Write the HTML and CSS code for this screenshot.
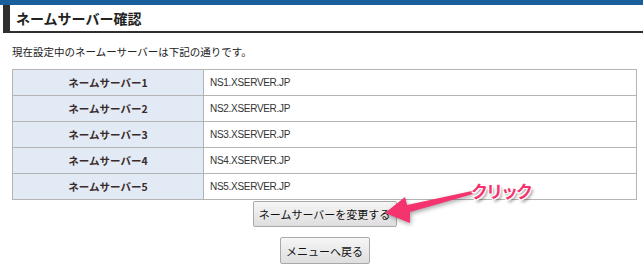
FILE: index.html
```html
<!DOCTYPE html>
<html lang="ja">
<head>
  <meta charset="UTF-8">
  <title>ネームサーバー確認</title>
  <link rel="stylesheet" href="styles.css">
</head>
<body>
  <div class="topbar"></div>

  <div class="page">
    <h2 class="heading">ネームサーバー確認</h2>

    <div class="content">
      <p class="lead">現在設定中のネームーサーバーは下記の通りです。</p>

      <table class="ns-table">
        <tr><th>ネームサーバー1</th><td>NS1.XSERVER.JP</td></tr>
        <tr><th>ネームサーバー2</th><td>NS2.XSERVER.JP</td></tr>
        <tr><th>ネームサーバー3</th><td>NS3.XSERVER.JP</td></tr>
        <tr><th>ネームサーバー4</th><td>NS4.XSERVER.JP</td></tr>
        <tr><th>ネームサーバー5</th><td>NS5.XSERVER.JP</td></tr>
      </table>

      <div class="actions">
        <button class="btn btn-change">ネームサーバーを変更する</button>
        <button class="btn btn-back">メニューへ戻る</button>
      </div>
    </div>

    <!-- 注釈 -->
    <svg class="arrow" width="100" height="45" viewBox="0 0 100 45">
      <polygon points="5,28 25,12 27,20 92,6 93,9 30,27 30,38" fill="#f5336f"/>
    </svg>
    <div class="note">クリック</div>
  </div>
</body>
</html>
```

FILE: styles.css
```css
body {
  margin: 0;
  background: #fff;
  color: #333;
  font-family: "Liberation Sans", "Noto Sans CJK JP", sans-serif;
}

.topbar {
  height: 5px;
  background-color: #1b5e9c;
}

.page {
  position: relative;
  padding-left: 3px;
}

.heading {
  margin: 0;
  height: 26px;
  line-height: 26px;
  padding-left: 6px;
  border-left: 7px solid #2f2f2f;
  border-bottom: 2px solid #2f2f2f;
  font-family: "Noto Sans CJK JP", sans-serif;
  font-size: 14px;
  font-weight: bold;
  color: #222;
}

.content {
  padding: 0 6px 0 9px;
}

.lead {
  margin: 11px 0 9px;
  line-height: 16px;
  font-family: "Noto Sans CJK JP", sans-serif;
  font-size: 10.5px;
  color: #222;
}

.ns-table {
  width: 100%;
  border-collapse: collapse;
  border: 1px solid #b4b4b4;
}

.ns-table th,
.ns-table td {
  height: 25px;
  padding: 0;
  border: 1px solid #b4b4b4;
  font-size: 10px;
}

.ns-table th {
  width: 190px;
  background-color: #e2ebf5;
  font-family: "Noto Sans CJK JP", sans-serif;
  font-size: 10.5px;
  font-weight: bold;
  color: #3a2a2a;
  text-align: center;
}

.ns-table td {
  padding-left: 6px;
  letter-spacing: -0.3px;
  color: #333;
  text-align: left;
}

.actions {
  display: flex;
  flex-direction: column;
  align-items: center;
  gap: 10px;
  margin-top: 1px;
}

.btn {
  height: 26px;
  padding: 0;
  border: 1px solid #a9a9a9;
  border-radius: 2px;
  background: linear-gradient(#f6f6f6, #dedede);
  font-family: "Noto Sans CJK JP", sans-serif;
  font-size: 11px;
  color: #111;
  cursor: pointer;
}

.btn-change { width: 144px; }
.btn-back { width: 90px; height: 27px; }

.arrow {
  position: absolute;
  left: 380px;
  top: 180px;
  filter: drop-shadow(1px 2px 2px rgba(0, 0, 0, 0.35));
}

.note {
  position: absolute;
  left: 471px;
  top: 173px;
  font-family: "Noto Sans CJK JP", sans-serif;
  font-size: 17px;
  font-weight: bold;
  letter-spacing: -2px;
  color: #f5336f;
  text-shadow: -1px -1px 0 #fff, 1px -1px 0 #fff, -1px 1px 0 #fff, 1px 1px 0 #fff,
    2px 3px 3px rgba(0, 0, 0, 0.4);
}
```
